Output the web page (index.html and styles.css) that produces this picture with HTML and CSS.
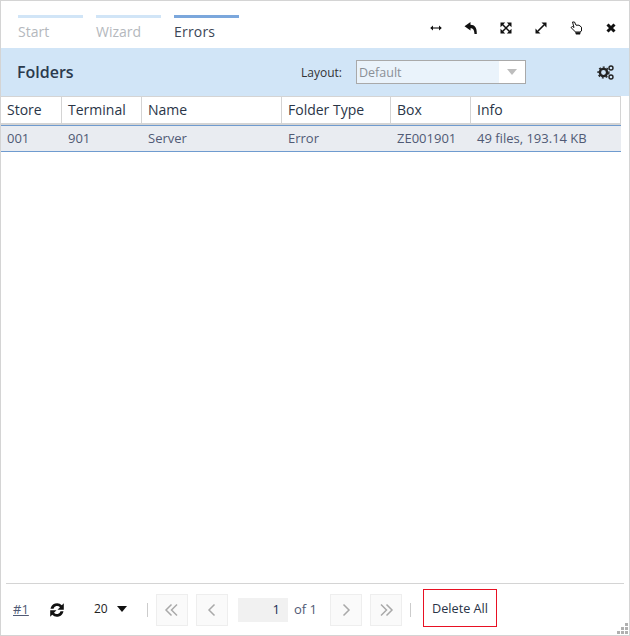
FILE: index.html
```html
<!DOCTYPE html>
<html lang="en">
  <head>
    <meta charset="UTF-8" />
    <title>Folders</title>
    <link rel="stylesheet" href="styles.css">
  </head>
  <body>
    <div class="window">
      <div class="topbar">
        <div class="steps">
          <div class="step">Start</div>
          <div class="step">Wizard</div>
          <div class="step active">Errors</div>
        </div>
        <div class="tools">
          <svg viewBox="0 0 14 14"><path d="M2 7h10" stroke="#111" stroke-width="1.100"/><path d="M4 4.500v5L1.200 7zM10 4.500v5L12.800 7z" fill="#111"/></svg>
          <svg viewBox="0 0 14 14"><path d="M6.500 1L.500 5.300l6 4.300V7.200c2.500 0 3.700 1.300 4 5.800h2.300C13 6.500 10.700 3.800 6.500 3.800z" fill="#111"/></svg>
          <svg viewBox="0 0 14 14"><path d="M1.500 1.500h4.700L1.500 6.200zM12.500 1.500v4.700L7.800 1.500zM1.500 12.500V7.800l4.700 4.700zM12.500 12.500H7.800l4.700-4.700z" fill="#111"/><path d="M3 3l8 8M11 3l-8 8" stroke="#111" stroke-width="1.500"/></svg>
          <svg viewBox="0 0 14 14"><path d="M7.500 1.500h5v5zM1.500 7.500v5h5z" fill="#111"/><path d="M10 4l-6 6" stroke="#111" stroke-width="1.600"/></svg>
          <svg viewBox="0 0 14 14"><path d="M3.500 1h2L7 4.200h3l2.500 2V10l-1.500 1H6.500L2 6.500l1.500-1L5 6.500z" fill="#fff" stroke="#111"/><path d="M6 11.200h5.800L11 13.500H7z" fill="#111"/></svg>
          <svg viewBox="0 0 14 14"><path d="M3.500 3.500l7 7M10.500 3.500l-7 7" stroke="#111" stroke-width="3"/></svg>
        </div>
      </div>

      <div class="titlebar">
        <h1>Folders</h1>
        <span class="layout-label">Layout:</span>
        <div class="layout-select">
          <span class="layout-value">Default</span>
          <span class="layout-arrow"></span>
        </div>
        <svg class="gears" viewBox="0 0 17 17">
          <circle cx="6.500" cy="8.500" r="3.600" fill="none" stroke="#222" stroke-width="2.400"/>
          <circle cx="6.500" cy="8.500" r="5.400" fill="none" stroke="#222" stroke-width="1.400" stroke-dasharray="2 2"/>
          <circle cx="14" cy="4" r="2" fill="none" stroke="#222" stroke-width="1.400"/>
          <circle cx="14" cy="13" r="2" fill="none" stroke="#222" stroke-width="1.400"/>
        </svg>
      </div>

      <div class="grid">
        <div class="grid-head">
          <div>Store</div>
          <div>Terminal</div>
          <div>Name</div>
          <div>Folder Type</div>
          <div>Box</div>
          <div>Info</div>
        </div>
        <div class="grid-row">
          <div>001</div>
          <div>901</div>
          <div>Server</div>
          <div>Error</div>
          <div>ZE001901</div>
          <div>49 files, 193.14 KB</div>
        </div>
      </div>

      <div class="pager">
        <a class="row-link" href="#">#1</a>
        <svg class="refresh" viewBox="0 0 16 16">
          <path d="M1.500 6.800A6.700 6.700 0 0 1 12.800 3.200L14.800 1.200v6.500H8.500L11 5.300A3.700 3.700 0 0 0 4.500 6.800z" fill="#111"/>
          <path d="M14.500 9.200A6.700 6.700 0 0 1 3.200 12.800L1.200 14.800V8.300h6.300L5 10.700A3.700 3.700 0 0 0 11.500 9.200z" fill="#111"/>
        </svg>
        <div class="page-size">20<span class="caret"></span></div>
        <span class="divider"></span>
        <button class="page-btn first"><svg viewBox="0 0 16 16"><path d="M7.500 2.500L2 8l5.500 5.500M13 2.500L7.500 8l5.500 5.500"/></svg></button>
        <button class="page-btn prev"><svg viewBox="0 0 16 16"><path d="M10.500 2.500L5 8l5.500 5.500"/></svg></button>
        <div class="page-input">1</div>
        <span class="page-of">of 1</span>
        <button class="page-btn next"><svg viewBox="0 0 16 16"><path d="M5.500 2.500L11 8l-5.500 5.500"/></svg></button>
        <button class="page-btn last"><svg viewBox="0 0 16 16"><path d="M3 2.500L8.500 8 3 13.500M8.500 2.500L14 8l-5.500 5.500"/></svg></button>
        <span class="divider second"></span>
        <button class="delete-btn">Delete All</button>
      </div>

      <div class="resize-grip">
        <span></span><span></span><span></span><span></span><span></span><span></span>
      </div>
    </div>
  </body>
</html>
```

FILE: styles.css
```css
:root {
  --border: #d4d4d4;
  --blue: #d1e5f7;
  --text: #2a3547;
}

html,
body {
  margin: 0;
  height: 100%;
}

body {
  font-family: "Open Sans", sans-serif;
  color: var(--text);
  background: #fff;
}

.window {
  position: relative;
  box-sizing: border-box;
  width: 630px;
  height: 636px;
  border: 1px solid var(--border);
  display: flex;
  flex-direction: column;
  overflow: hidden;
}

/* steps + window tools */
.topbar {
  height: 47px;
  display: flex;
  justify-content: space-between;
  flex-shrink: 0;
}

.steps {
  display: flex;
  gap: 13px;
  padding: 14px 0 0 17px;
}

.step {
  width: 65px;
  border-top: 3px solid #d1e5f7;
  padding-top: 4px;
  font-size: 14px;
  line-height: 20px;
  color: #b4b8bd;
}

.step.active {
  border-top-color: #7ba7dc;
  color: #3c4656;
  font-weight: 500;
  letter-spacing: 0.2px;
}

.tools {
  display: flex;
  gap: 21px;
  padding: 20px 11px 0 0;
}

.tools svg {
  width: 14px;
  height: 14px;
}

.titlebar {
  height: 48px;
  flex-shrink: 0;
  background: var(--blue);
  display: flex;
  align-items: center;
  padding: 0 15px 0 16px;
}

.titlebar h1 {
  margin: 0;
  font-size: 16px;
  font-weight: 600;
  color: #2b3a4d;
  flex: 1;
}

.layout-label {
  font-size: 12px;
  color: #333;
  margin-right: 14px;
}

.layout-select {
  box-sizing: border-box;
  width: 170px;
  height: 24px;
  border: 1px solid #a9a9a9;
  background: #eaf3fb;
  display: flex;
  margin-right: 71px;
}

.layout-value {
  flex: 1;
  padding-left: 2px;
  font-size: 12.500px;
  line-height: 23px;
  color: #8a9097;
}

.layout-arrow {
  width: 26px;
  background: #fff;
  position: relative;
}

.layout-arrow::after {
  content: "";
  position: absolute;
  left: 8px;
  top: 8px;
  border-left: 5px solid transparent;
  border-right: 5px solid transparent;
  border-top: 6px solid #bdbdbd;
}

.gears {
  width: 17px;
  height: 17px;
}

/* folder table */
.grid {
  flex: 1;
  font-size: 14px;
}

.grid-head,
.grid-row {
  display: grid;
  grid-template-columns: 61px 80px 140px 109px 80px 150px;
  width: 620px;
}

.grid-head {
  box-sizing: border-box;
  height: 29px;
  border-top: 1px solid var(--border);
  border-bottom: 2px solid var(--border);
  line-height: 26px;
}

.grid-head > div {
  box-sizing: border-box;
  padding-left: 6px;
  border-right: 1px solid var(--border);
}

.grid-row {
  box-sizing: border-box;
  height: 27px;
  background: #e9ecf1;
  border-top: 1px solid #6f9bcf;
  border-bottom: 1px solid #6f9bcf;
  font-size: 13px;
  line-height: 25px;
  color: #505a75;
}

.grid-row > div {
  padding-left: 6px;
}

/* bottom pager */
.pager {
  height: 52px;
  flex-shrink: 0;
  margin: 0 5px;
  border-top: 1px solid var(--border);
  display: flex;
  align-items: center;
  font-size: 12px;
  box-sizing: border-box;
}

.row-link {
  color: #505a75;
  font-size: 13px;
  margin-left: 7px;
  width: 36px;
  padding-bottom: 2px;
}

.refresh {
  width: 16px;
  height: 16px;
}

.page-size {
  margin-left: 29px;
  width: 53px;
  display: flex;
  align-items: center;
  color: #222;
  padding-bottom: 2px;
}

.caret {
  margin-left: 9px;
  border-left: 5px solid transparent;
  border-right: 5px solid transparent;
  border-top: 6px solid #111;
}

.divider {
  width: 1px;
  height: 14px;
  background: #ccc;
  margin-right: 8px;
}

.divider.second {
  margin-right: 12px;
}

.page-btn {
  box-sizing: border-box;
  width: 32px;
  height: 32px;
  padding: 0;
  background: #fafafa;
  border: 1px solid #eee;
  display: flex;
  align-items: center;
  justify-content: center;
  margin-right: 8px;
}

.page-btn svg {
  width: 16px;
  height: 16px;
  fill: none;
  stroke: #a9a9a9;
  stroke-width: 1.500;
}

.page-input {
  box-sizing: border-box;
  width: 50px;
  height: 24px;
  margin-left: 2px;
  background: #f1f1f1;
  color: #1a2b55;
  text-align: right;
  padding-right: 8px;
  font-size: 13px;
  line-height: 22px;
}

.page-of {
  margin-left: 6px;
  width: 36px;
  font-size: 13px;
  color: #505a75;
  padding-bottom: 2px;
}

.delete-btn {
  box-sizing: border-box;
  width: 74px;
  height: 38px;
  margin-bottom: 3px;
  background: #fff;
  border: 1px solid #e81123;
  font-family: inherit;
  font-size: 12.700px;
  color: var(--text);
  padding: 0;
}

.resize-grip {
  position: absolute;
  right: 1px;
  bottom: 1px;
  width: 11px;
  height: 11px;
  display: grid;
  grid-template-columns: repeat(3, 3px);
  grid-template-rows: repeat(3, 3px);
  gap: 1px;
}

.resize-grip span {
  background: #b0b0b0;
}

.resize-grip span:nth-child(1) {
  grid-area: 1 / 3;
}

.resize-grip span:nth-child(2) {
  grid-area: 2 / 2;
}

.resize-grip span:nth-child(3) {
  grid-area: 2 / 3;
}

.resize-grip span:nth-child(4) {
  grid-area: 3 / 1;
}

.resize-grip span:nth-child(5) {
  grid-area: 3 / 2;
}

.resize-grip span:nth-child(6) {
  grid-area: 3 / 3;
}
```
